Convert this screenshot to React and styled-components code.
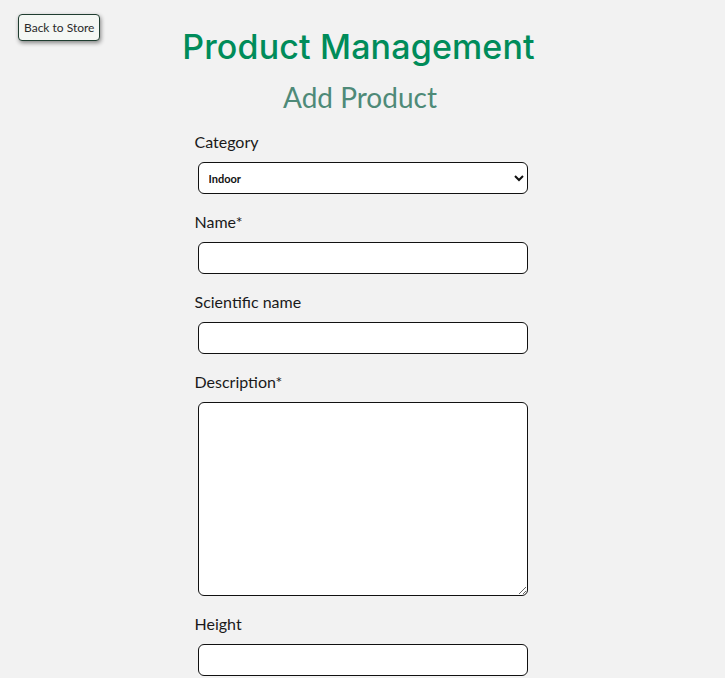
import styled, { createGlobalStyle } from "styled-components";

const GlobalStyle = createGlobalStyle`
  html, body {
    margin: 0;
    padding: 0;
    background-color: #f2f2f2;
    font-family: Lato, "Liberation Sans", sans-serif;
    color: #1a1a1a;
  }
`;

const Page = styled.div`
  min-height: 100vh;
  padding: 14px 18px 0;
  box-sizing: border-box;
`;

const BackButton = styled.button`
  display: block;
  height: 27px;
  padding: 0 5px;
  font-family: Lato, "Liberation Sans", sans-serif;
  font-size: 12px;
  color: #2a2a2a;
  background-color: #f4f7f4;
  border: 1px solid #1f3d30;
  border-radius: 4px;
  box-shadow: 1px 2px 4px rgba(0, 0, 0, 0.45);
  cursor: pointer;
`;

const Main = styled.main`
  width: 336px;
  margin: -27px auto 0;
`;

const Title = styled.h1`
  text-align: center;
  white-space: nowrap;
  font-family: Inter, "Noto Sans", sans-serif;
  font-size: 34px;
  font-weight: 500;
  line-height: 40px;
  letter-spacing: 0.15px;
  color: #008c5a;
  margin: 13px -36px 0 -44px;
`;

const Subtitle = styled.h2`
  margin: 13px 0 0 -5px;
  text-align: center;
  font-size: 28px;
  font-weight: 400;
  line-height: 34px;
  color: #4e8a78;
`;

const Form = styled.form`
  display: flex;
  flex-direction: column;
  margin-top: 18px;
`;

const Field = styled.div`
  display: flex;
  flex-direction: column;
  margin-bottom: 18px;
`;

const Label = styled.label`
  font-size: 16px;
  line-height: 19px;
  margin-bottom: 11px;
`;

const inputBase = `
  box-sizing: border-box;
  width: 330px;
  margin-left: 3px;
  border: 1px solid #111;
  border-radius: 6px;
  background-color: #fff;
  font-family: Lato, "Liberation Sans", sans-serif;
`;

const Input = styled.input`
  ${inputBase}
  height: 32px;
  padding: 0 8px;
`;

const Select = styled.select`
  ${inputBase}
  height: 32px;
  padding: 0 6px;
  font-size: 11px;
  font-weight: 700;
  color: #111;
`;

const TextArea = styled.textarea`
  ${inputBase}
  height: 194px;
  padding: 6px 8px;
  display: block;
`;

const fields = [
  { id: "name", label: "Name*" },
  { id: "scientific", label: "Scientific name" },
];

function App() {
  return (
    <Page>
      <GlobalStyle />
      <BackButton type="button">Back to Store</BackButton>
      <Main>
        <Title>Product Management</Title>
        <Subtitle>Add Product</Subtitle>
        <Form>
          <Field>
            <Label htmlFor="category">Category</Label>
            <Select id="category" defaultValue="indoor">
              <option value="indoor">Indoor</option>
              <option value="outdoor">Outdoor</option>
            </Select>
          </Field>
          {fields.map((f) => (
            <Field key={f.id}>
              <Label htmlFor={f.id}>{f.label}</Label>
              <Input id={f.id} type="text" />
            </Field>
          ))}
          <Field>
            <Label htmlFor="description">Description*</Label>
            <TextArea id="description" />
          </Field>
          <Field>
            <Label htmlFor="height">Height</Label>
            <Input id="height" type="text" />
          </Field>
        </Form>
      </Main>
    </Page>
  );
}

export default App;
